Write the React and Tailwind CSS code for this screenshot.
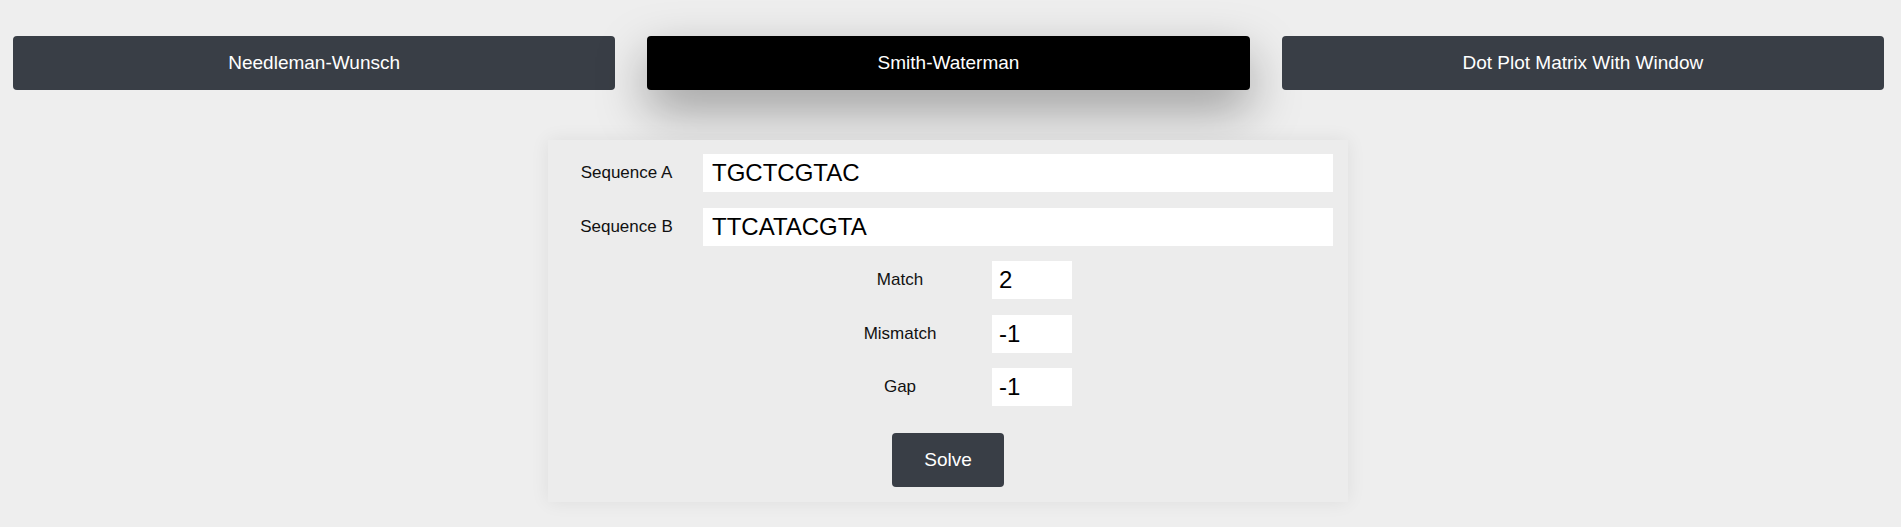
import React, { useState } from 'react';

const TABS = ['Needleman-Wunsch', 'Smith-Waterman', 'Dot Plot Matrix With Window'];

const App = () => {
  const [active, setActive] = useState('Smith-Waterman');
  const [form, setForm] = useState({
    seqA: 'TGCTCGTAC',
    seqB: 'TTCATACGTA',
    match: '2',
    mismatch: '-1',
    gap: '-1'
  });

  const params = [
    ['Match', 'match'],
    ['Mismatch', 'mismatch'],
    ['Gap', 'gap']
  ];

  return (
    <div className="min-h-screen bg-[#eeeeee] font-['Liberation_Sans',Arial,sans-serif] text-[#111]">
      <div className="flex gap-[32px] pl-[13px] pr-[17px] pt-[36px]">
        {TABS.map(tab => (
          <button
            key={tab}
            onClick={() => setActive(tab)}
            className={
              tab === active
                ? 'flex-1 h-[54px] rounded-[4px] bg-black text-white text-[19px] shadow-[0_20px_50px_rgba(0,0,0,0.35)]'
                : 'flex-1 h-[54px] rounded-[4px] bg-[#393e46] text-white text-[19px]'
            }
          >
            {tab}
          </button>
        ))}
      </div>

      <div className="mt-[50px] flex justify-center pr-[5px]">
        <div className="w-[800px] bg-[#ececec] px-[15px] pt-[14px] pb-[15px] shadow-[0_0_18px_rgba(0,0,0,0.07)]">
          <div className="flex flex-col gap-[15.5px]">
            <div className="flex items-center">
              <label className="w-[127px] text-center text-[17px]">Sequence A</label>
              <input
                className="ml-[13px] h-[38px] flex-1 bg-white px-[9px] text-[24px] text-black outline-none"
                value={form.seqA}
                onChange={e => setForm({ ...form, seqA: e.target.value })}
              />
            </div>
            <div className="flex items-center">
              <label className="w-[127px] text-center text-[17px]">Sequence B</label>
              <input
                className="ml-[13px] h-[38px] flex-1 bg-white px-[9px] text-[24px] text-black outline-none"
                value={form.seqB}
                onChange={e => setForm({ ...form, seqB: e.target.value })}
              />
            </div>
            {params.map(([label, key]) => (
              <div key={key} className="flex items-center justify-center">
                <label className="w-[152px] text-center text-[17px]">{label}</label>
                <input
                  className="ml-[16px] h-[38px] w-[80px] bg-white px-[7px] text-[24px] text-black outline-none"
                  value={form[key]}
                  onChange={e => setForm({ ...form, [key]: e.target.value })}
                />
              </div>
            ))}
          </div>
          <div className="mt-[27px] flex justify-center">
            <button className="h-[54px] w-[112px] rounded-[4px] bg-[#393e46] text-[19px] text-white">Solve</button>
          </div>
        </div>
      </div>
    </div>
  );
};

export default App;
